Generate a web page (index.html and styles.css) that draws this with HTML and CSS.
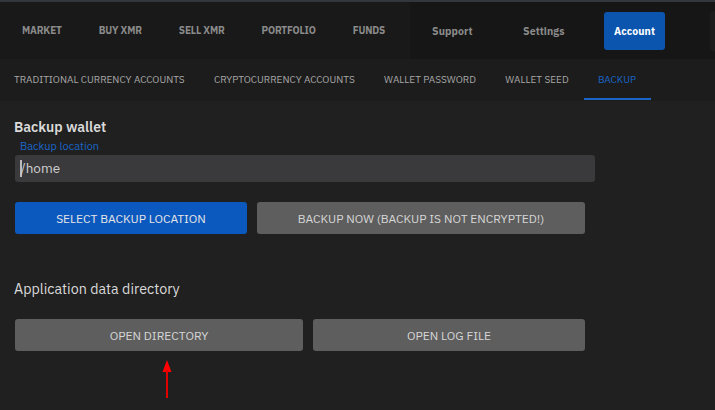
FILE: index.html
```html
<!DOCTYPE html>
<html>
<head>
<meta charset="utf-8">
<link rel="stylesheet" href="styles.css">
</head>
<body>
<div class="topline"></div>
<nav class="mainnav">
  <div class="group left">
    <span class="nav-item">MARKET</span>
    <span class="nav-item">BUY XMR</span>
    <span class="nav-item">SELL XMR</span>
    <span class="nav-item">PORTFOLIO</span>
    <span class="nav-item">FUNDS</span>
  </div>
  <div class="group right">
    <span class="nav-item cap">Support</span>
    <span class="nav-item cap">Settings</span>
    <span class="nav-item cap active">Account</span>
    <span class="edge"></span>
  </div>
</nav>
<nav class="subnav">
  <span class="sub-item">TRADITIONAL CURRENCY ACCOUNTS</span>
  <span class="sub-item">CRYPTOCURRENCY ACCOUNTS</span>
  <span class="sub-item">WALLET PASSWORD</span>
  <span class="sub-item">WALLET SEED</span>
  <span class="sub-item selected">BACKUP</span>
</nav>
<main class="content">
  <h2 class="title bold">Backup wallet</h2>
  <div class="field">
    <label class="field-label">Backup location</label>
    <div class="input"><span class="caret"></span>/home</div>
  </div>
  <div class="btn-row">
    <button class="btn primary w232">SELECT BACKUP LOCATION</button>
    <button class="btn w328">BACKUP NOW (BACKUP IS NOT ENCRYPTED!)</button>
  </div>
  <h2 class="title second">Application data directory</h2>
  <div class="btn-row">
    <button class="btn w288">OPEN DIRECTORY</button>
    <button class="btn w272">OPEN LOG FILE</button>
  </div>
  <svg class="arrow" width="12" height="40" viewBox="0 0 12 40">
    <polygon points="6,0 1.5,12 10.5,12" fill="#ff0000"/>
    <rect x="5" y="10" width="2" height="28" fill="#e00000"/>
  </svg>
</main>
</body>
</html>
```

FILE: styles.css
```css
* { box-sizing: border-box; }
html, body { margin: 0; padding: 0; }
body {
  width: 715px;
  height: 410px;
  overflow: hidden;
  background: #202020;
  font-family: "IBM Plex Sans", Inter, "Noto Sans", sans-serif;
}
.topline { height: 2px; background: #33373b; }
.mainnav {
  display: flex;
  height: 57px;
  background: #161616;
}
.group { display: flex; align-items: center; }
.group.left { background: #191919; padding-left: 22px; gap: 37px; width: 410px; }
.group.right { padding-left: 22px; gap: 0; flex: 1; }
.nav-item {
  font-size: 10px;
  font-weight: 700;
  color: #8a8a8a;
  letter-spacing: -0.15px;
}
.group.right .nav-item { width: 91px; font-size: 10.5px; letter-spacing: 0.1px; }
.group.right .nav-item.active {
  width: 61px;
  height: 38px;
  margin-left: -10px;
  background: #0b55ae;
  border-radius: 3px;
  color: #ffffff;
  display: flex;
  align-items: center;
  justify-content: center;
}
.edge {
  margin-left: auto;
  width: 5px;
  height: 40px;
  background: #1d1d1d;
  border-radius: 3px 0 0 3px;
}
.subnav {
  display: flex;
  height: 42px;
  align-items: center;
  background: #1c1c1c;
  padding-left: 14px;
  gap: 29.3px;
}
.sub-item {
  font-size: 10px;
  color: #a8a8a8;
  position: relative;
  height: 42px;
  line-height: 42px;
}
.sub-item.selected { color: #1a66c8; padding: 0 15px 0 14px; margin-left: -14px; }
.sub-item.selected::after {
  content: "";
  position: absolute;
  left: 0; right: 0; bottom: 1px;
  height: 2px;
  background: #1a66c8;
}
.content { padding: 17px 15px 0 15px; position: relative; height: 309px; }
.title {
  margin: 0 0 0 -1px;
  font-size: 14px;
  font-weight: 400;
  color: #dadada;
  line-height: 18px;
}
.title.bold { font-weight: 600; }
.title.second { margin-top: 46px; font-size: 14.3px; }
.field { margin-top: 4px; width: 580px; }
.field-label {
  display: block;
  font-size: 11px;
  color: #1a66c8;
  padding-left: 5px;
  line-height: 13px;
}
.input {
  margin-top: 2px;
  height: 27px;
  background: #3a3a3c;
  border-radius: 3px;
  font-size: 13.5px;
  color: #cfcfcf;
  line-height: 27px;
  padding-left: 5px;
  display: flex;
  align-items: center;
}
.caret { width: 1.5px; height: 17px; background: #bbbbbb; margin-right: -1px; }
.btn-row { display: flex; gap: 10px; margin-top: 20px; }
.title.second + .btn-row { margin-top: 21px; }
.btn {
  height: 32px;
  border: none;
  border-radius: 3px;
  background: #5e5e5e;
  color: #d6d6d6;
  font-family: inherit;
  font-size: 12px;
  padding: 0;
}
.btn.primary { background: #0b59bf; color: #e6e6e6; }
.w232 { width: 232px; }
.w328 { width: 328px; }
.w288 { width: 288px; }
.w272 { width: 272px; }
.arrow { position: absolute; left: 161px; top: 259px; }
```
